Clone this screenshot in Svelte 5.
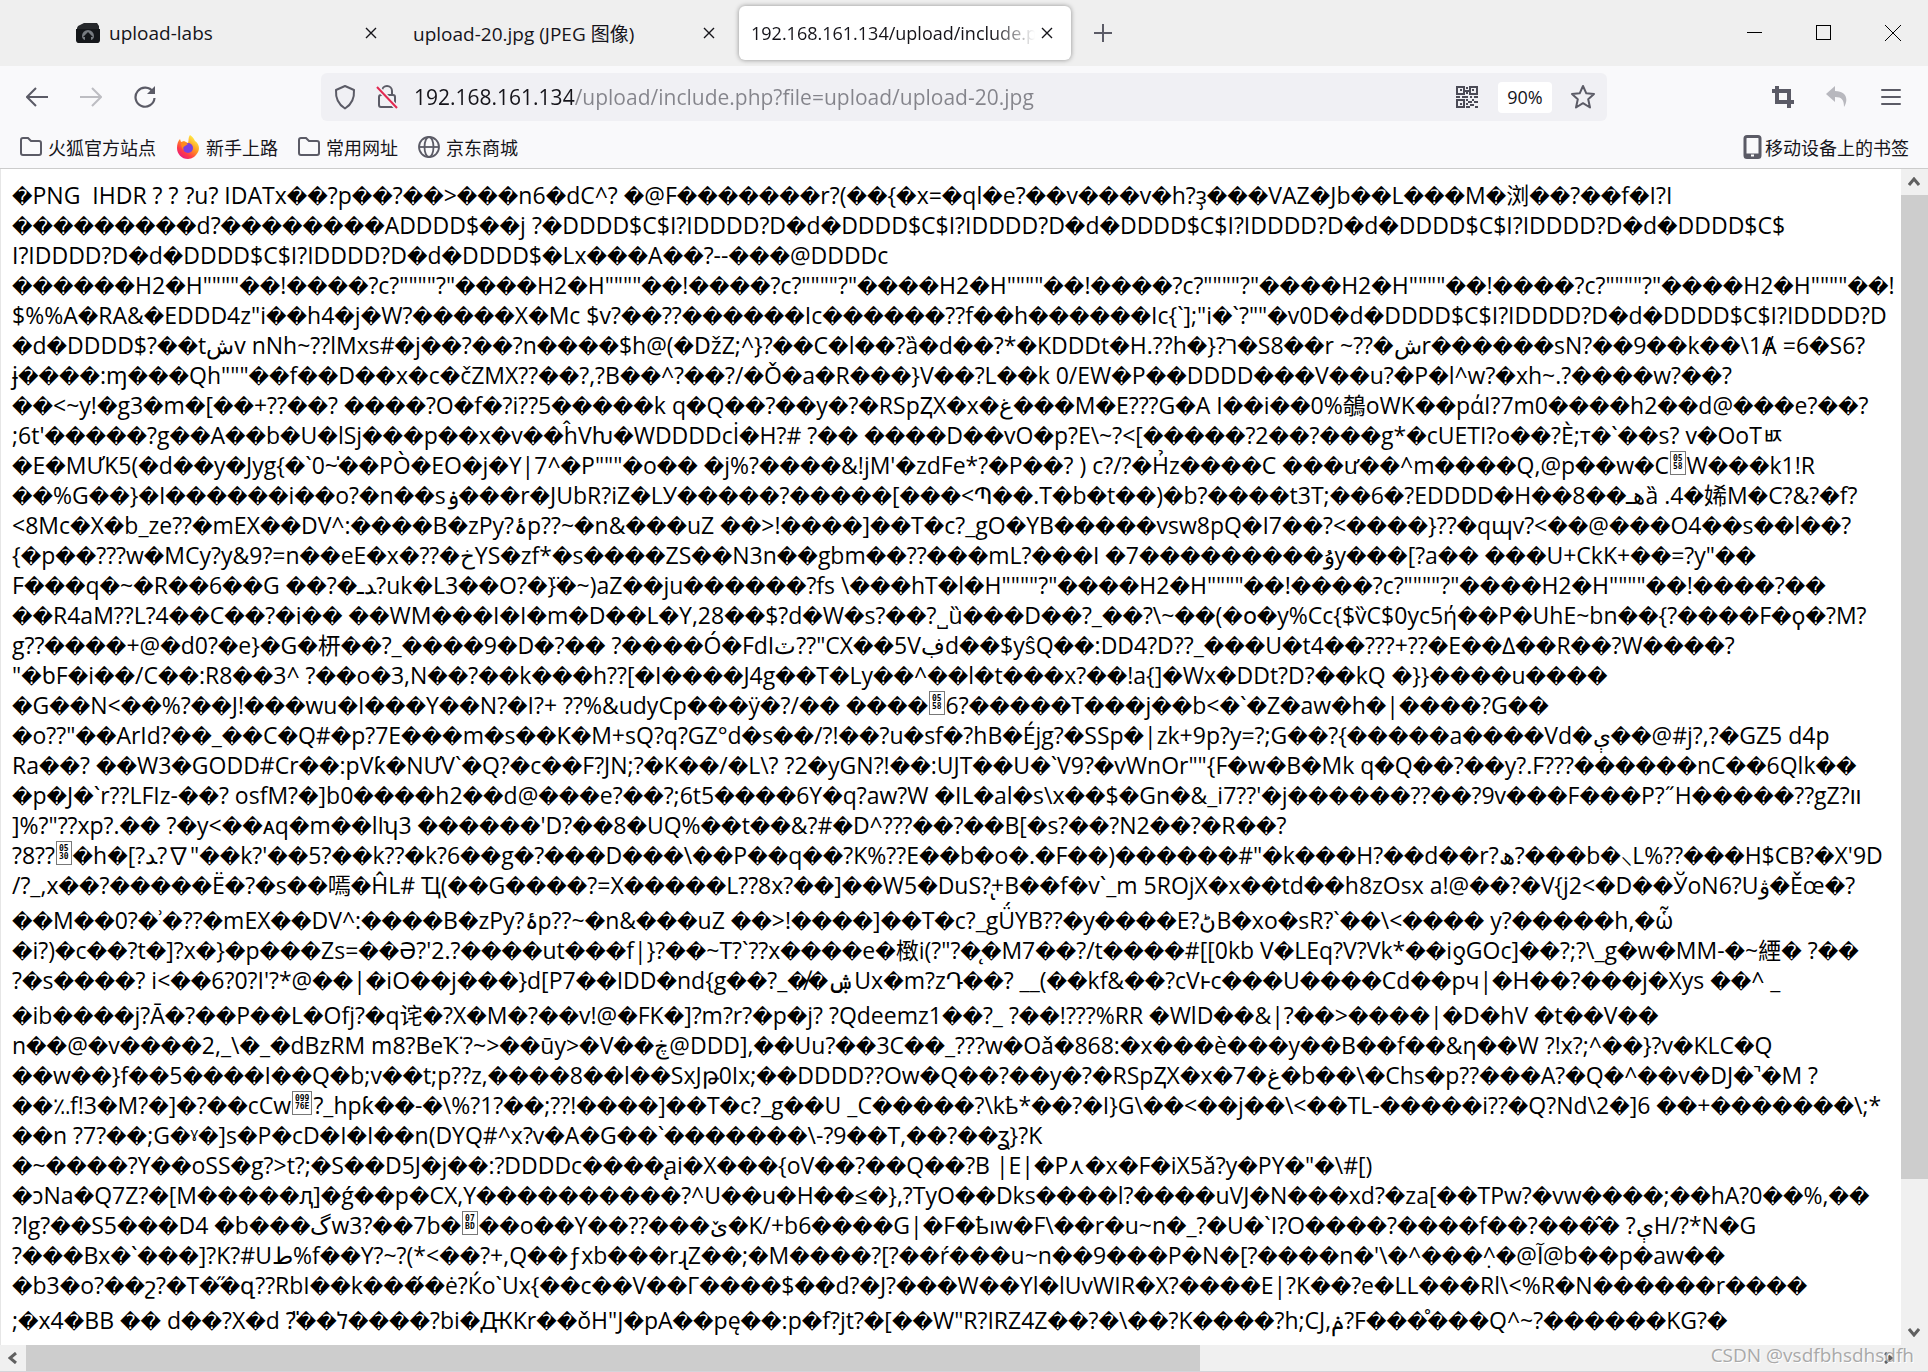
<script>
  let address = '192.168.161.134/upload/include.php?file=upload/upload-20.jpg';

  const tabs = [
    { title: 'upload-labs', icon: true },
    { title: 'upload-20.jpg (JPEG 图像)' },
    { title: '192.168.161.134/upload/include.php', active: true }
  ];

  const bookmarks = [
    { name: '火狐官方站点', icon: 'folder' },
    { name: '新手上路', icon: 'firefox' },
    { name: '常用网址', icon: 'folder' },
    { name: '京东商城', icon: 'globe' }
  ];

  const block = 'DDDD$C$I?IDDDD?D�d�';
  const quotes = 'H2�H""""��!����?c?""""?"����';

  // ⟦hex⟧ is a code point without a glyph, shown as a small box
  const lines = [
    '�PNG  IHDR ? ? ?u? IDATx��?p��?��>���n6�dC^? �@F�������r?(��{�x=�ql�e?��v���v�h?ҙ���VAZ�Jb��L���M�浏��?��f�I?I',
    '���������d?��������ADDDD$��j ?�' + block.repeat(4) + 'DDDD$C$',
    'I?IDDDD?D�d�' + block + 'DDDD$�Lx���A��?--���@DDDDc',
    '������' + quotes.repeat(4) + 'H2�H""""��!',
    '$%%A�RA&�EDDD4z"i��h4�j�W?�����X�Mc $v?��??������Ic������??f��h������Ic{`];"i�`?""�v0D�d�' + block + 'DDDD$C$I?IDDDD?D',
    '�d�DDDD$?��tشv nNh~??lMxs#�j��?��?n����$h@(�ǅZ;^}?��C�l��?ȁ�d��?*�KDDDt�H.??h�}?ר�S8��r ~??�شr������sN?��9��k��\\1Ⱥ =6�S6?',
    'ɉ����:ɱ���Qh"""��f��D��x�c�čZMX??��?,?B��^?��?/�Ǒ�a�R���}V��?L��k 0/EW�P��DDDD���V��u?�P�l^w?�xh~.?����w?��?',
    '��<~y!�g3�m�[��+??��? ����?O�f�?i??5�����k q�Q��?��y�?�RSpⱫX�x�غ���M�E???G�A I��i��0%鵸oWK��pάI?7m0����h2��d@���e?��?',
    ';6t\'�����?g��A��b�U�lSj���p��x�v��ĥVƕ�WDDDDcİ�H?# ?�� ����D��vO�p?E\\~?<[�����?2��?���g*�cUETI?o��?È;т�`��s? v�OoTㅶ',
    '�E�MƯK5(�d��y�Jyg{�`0~̍��PÒ�EO�j�Y|7^�P"""�o�� �j%?����&!jM\'�zdFe*?�P��? ) c?/?�H̉z����C ���ư��^m����Q,@p��w�C⟦0558⟧W���k1!R',
    '��%G��}�I������i��o?�n��sۏ���r�JUbR?iZ�LУ�����?�����[���<Պ��.T�b�t��)�b?����t3T;��6�?EDDDD�H��8��ـهȁ .4�㛓M�C?&?�f?',
    '<8Mc�X�b_ze??�mEX��DV^:����B�zPy?ۂp??~�n&���uZ ��>!����]��T�c?_gO�YB�����vsw8pQ�I7��?<����}??�qɰv?<��@���O4��s��l��?',
    '{�p��???w�MCy?y&9?=n��eE�x�??�خYS�zf*�s����ZS��N3n��gbm��??���mL?���I �7���������ۇy���[?a�� ���U+CkK+��=?y"��',
    'F���q�~�R��6��G ��?�ـﺪ?uk�L3��O?�}̈�~)aZ��ju������?fs \\���hT�l�H""""?"����' + quotes + 'H2�H""""��!����?��',
    '��R4aM??L?4��C��?�i�� ��WM���I�I�m�D��L�Y,28��$?d�W�s?��?˽ȕ���D��?_��?\\~��(�օ�y%Cc{$v̏C$0yc5ή��P�UhE~bn��{?����F�ϙ�?M?',
    'g??����+@�d0?�e}�G�枅��?_����9�D�?�� ?����Ó�FdIٽ??"CX��5Vڣd��$yŝQ��:DD4?D??_���U�t4��???+??�E��∆��R��?W����?',
    '"�ƅF�i��/C��:R8��3^ ?��o�3,N��?��k���h??[�I����J4g��T�Ly��^��l�t���x?��!a{]�Wx�DDt?D?��kQ �}}����u����',
    '�G��N<��%?��J!���wu�I���Y��N?�I?+ ??%&udyCp���ÿ�?/�� ����⟦0558⟧6?�����T���j��b<�`�Z�aw�h�|����?G��',
    '�o??"��ArId?��_��C�Q#�p?7E���m�s��Ƙ�M+sQ?q?GZ°d�s��/?!��?u�sf�?hB�Éjg?�SSp�|zk+9p?y=?;G��?{�����a����Vd�ې��@#j?,?�GZ5 d4p',
    'Ra��? ��W3�GODD#Cr��:pVƙ�NƯV`�Q?�c��F?JN;?�K��/�L\\? ?2�yGN?!��:UJT��U�`V9?�vWnOr""{F�w�B�Mk q�Q��?��y?.F???������nC��6Qlk��',
    '�p�J�`r??LFIz-��? osfM?�]b0����h2��d@���e?��?;6t5����6Y�q?aw?W �IL�al�s\\x��$�Gn�&_i7??\'�j������??��?9v���F���P?˝H�����??gZ?װ',
    ']%?"??xp?.�� ?�y<��ᴀq�m��lIʮ3 ������\'D?��8�UQ%��t��&?#�D^???��?��B[�s?��?N2��?�R��?',
    '?8??⟦0530⟧�h�[?ﺪ?∇"��k?\'��5?��k??�k?6��g�?���D���\\��P��q��?K%??E��b�o�.�F��)������#"�k���H?��d��r?ھ?���b�⸜L%??���H$CB?�X\'9D',
    '/?_,x��?�����Ë�?�s��嘕�ĤL# Ҵ(��G����?=X�����L??8x?��]��W5�DuS?̢+B��f�v`_m 5ROjX�x��td��h8zOsx a!@��?�V{j2<�D��ЎoN6?Uۋ�Ěœ�?',
    '��M��0?�ʾ�??�mEX��DV^:����B�zPy?ۂp??~�n&���uZ ��>!����]��T�c?_gǗYB??�y����E?ڻB�xo�sR?`��\\<���� y?�����h,�ὧ',
    '�i?)�c��?t�]?x�}�p���Zs=��Ə?\'2.?����ut���f|}?��~T?`??x����e�㮹i(?"?�̨�M7��?/t����#[[0kb V�LEq?V?Vk*��iƍGOc]��?;?\\_g�w�MM-�~緸� ?��',
    '?�s����? i<��6?0?I\'?*@��|�iO��j���}d[P7��IDD�nd{g��?_�̸�ۺUx�m?zԴ��? __(��kf&��?cVⱶc���U����Cd��pч|�H��?���j�Xys ��^ _',
    '�ib����j?Ā�?��P��L�Ofj?�q诧�?X�M�?��v!@�FK�]?m?r?�p�j? ?Qdeemz1��?_ ?��!???%RR �WlD��&|?��>����|�D�hV �t��V��',
    'n��@�v����2,_\\�_�dBzRM m8?BeҠ˙?~>��ūy>�V��ڿ@DDD],��Uu?��3C��_???w�Oǎ�868:�x���è���y��B��f��&η��W ?!x?;^��}?v�KLC�Q',
    '��w��}f��5����I��Q�b;v��t;p??z,����8��l��SxJթ0Ix;��DDDD??Ow�Q��?��y�?�RSpⱫX�x�7�غ�b��\\�Chs�p??���A?�Q�^��v�DJ�̚�M ?',
    '��؉f!3�M?�]�?��cCw⟦09976E⟧?_hpƙ��-�\\%?1?��;??!����]��T�c?_g��U _C�����?\\kҍ*��?�I}G\\��<��j��\\<��TL-�����i??�Q?Nd\\2�]6 ��+�������\\;*',
    '��n ?7?��;G�ˠ�]s�P�cD�I�I��n(DYQ#^x?v�A�G��`�������\\-?9��T,��?��ʓ}?K',
    '�~����?Y��oSS�g?>t?;�S��D5J�j��:?DDDDc����̢ai�X���{oV��?��Q��?B |E|�P⋏�x�F�iX5ǎ?y�PY�"�\\#[)',
    '�ɔNa�Q7Z?�[M�����ԯ]�ǵ��p�CX,Y����������?^U��u�H��≤�},?TyO��Dks����l?����uVJ�N���xd?�za[��TPw?�vw����;��hA?0��%,��',
    '?lg?��S5���D4 �b���گw3?��7b�⟦07BD⟧��o��Y��??���ێ�K/+b6����G|�F�ҍıw�F\\��r�u~n�_?�U�`I?O����?����f��?���̂� ?ېH/?*N�G',
    '?���Bx�`���]?K?#Uط%f��Y?~?(*<��?+,Q��ƒxb���rɻZ��;�M����?[?��ŕ���u~n��9���P�N�[?����n�\'\\�^���^̣�@آ@b��p�aw��',
    '�b3�o?��շ?�T�̋�զ??RbI��k���́�ė?Ќo`Ux{��c��V��Γ����$��d?�J?���W��Yl�lUvWIR�X?����E|?K��?e�LL���Rl\\<%R�N������r����',
    ';�x4�BB �� d��?X�d ?̎��ל����?bi�ԪKr��ǒH"J�pA��pę��:p�f?jt?�[��W"R?IRZ4Z��?�\\��?K����?h;CJ,ݥ?F���̊���Q^~?������KG?�'
  ];

  // these lines hold stacked marks and are a little taller than the rest
  const tall = [24, 27, 37];

  function runs(line) {
    return line.split(/(�+|⟦\w+⟧)/).filter(Boolean);
  }
</script>

<div class="window">
  <header class="tabbar">
    <div class="tabs">
      {#each tabs as tab}
        <div class="tab" class:active={tab.active}>
          {#if tab.icon}
            <svg class="favicon" viewBox="0 0 26 24" aria-hidden="true">
              <path d="M3 5 L9 2 L22 2 L24 5 V20 Q24 22 22 22 H4 Q2 22 2 20 V7 Z" fill="#26282b" />
              <path d="M1 8 H25 V19 Q25 22 22 22 H4 Q1 22 1 19 Z" fill="#15171a" />
              <path d="M13 9 a6 6 0 0 1 6 6 q0 3-3 4 v-3 h2 l-5-5 -5 5 h2 v3 q-3-1-3-4 a6 6 0 0 1 6-6 Z" fill="#777b80" />
            </svg>
          {/if}
          <button class="tab-title">{tab.title}</button>
          <button class="tab-close" aria-label="关闭标签页">
            <svg width="12" height="12" viewBox="0 0 12 12"><path d="M1 1 L11 11 M11 1 L1 11" stroke="#15141a" stroke-width="1.4" /></svg>
          </button>
        </div>
      {/each}
      <button class="new-tab" aria-label="新建标签页">
        <svg width="18" height="18" viewBox="0 0 18 18"><path d="M9 0 V18 M0 9 H18" stroke="#5b5b66" stroke-width="2" /></svg>
      </button>
    </div>
    <div class="controls">
      <button aria-label="最小化"><svg width="16" height="16" viewBox="0 0 16 16"><path d="M0 7.5 H15" stroke="#000" /></svg></button>
      <button aria-label="最大化"><svg width="16" height="16" viewBox="0 0 16 16"><rect x="0.5" y="0.5" width="14" height="14" fill="none" stroke="#000" /></svg></button>
      <button aria-label="关闭"><svg width="16" height="16" viewBox="0 0 16 16"><path d="M0 0 L16 16 M16 0 L0 16" stroke="#000" /></svg></button>
    </div>
  </header>

  <nav class="toolbar">
    <button class="tool" aria-label="后退">
      <svg width="22" height="20" viewBox="0 0 22 20"><path d="M10 1 L1 10 L10 19 M1 10 H22" fill="none" stroke="#5b5b66" stroke-width="2" /></svg>
    </button>
    <button class="tool" aria-label="前进" disabled>
      <svg width="22" height="20" viewBox="0 0 22 20"><path d="M12 1 L21 10 L12 19 M21 10 H0" fill="none" stroke="#bdbdc2" stroke-width="2" /></svg>
    </button>
    <button class="tool" aria-label="刷新">
      <svg width="24" height="24" viewBox="0 0 24 24"><path d="M20 7 A9.5 9.5 0 1 0 21.5 13" fill="none" stroke="#5b5b66" stroke-width="2.2" /><path d="M22 1 V9 H14 Z" fill="#5b5b66" /></svg>
    </button>

    <div class="urlbar">
      <button class="url-icon" aria-label="跟踪保护">
        <svg width="22" height="26" viewBox="0 0 22 26"><path d="M11 2 L20 6 C20.500 14 18.500 20 11 24.500 C3.500 20 1.500 14 2 6 Z" fill="none" stroke="#5b5b66" stroke-width="2" stroke-linejoin="round" /></svg>
      </button>
      <button class="url-icon" aria-label="连接不安全">
        <svg width="22" height="26" viewBox="0 0 22 26"><path d="M6 11 V7 a5 5 0 0 1 10 0 V11" fill="none" stroke="#5b5b66" stroke-width="2" /><rect x="3" y="11" width="16" height="12" rx="2" fill="none" stroke="#5b5b66" stroke-width="2" /><path d="M1 3 L21 24" stroke="#f0f0f4" stroke-width="5" /><path d="M1 3 L21 24" stroke="#e22850" stroke-width="2" /></svg>
      </button>
      <input class="address" type="text" aria-label="网址" spellcheck="false" bind:value={address} />
      <button class="url-icon" aria-label="二维码">
        <svg width="22" height="22" viewBox="0 0 11 11" fill="none" stroke="#4a4a55">
          <path d="M.5 .5 H4 V4 H.5 Z M7 .5 H10.500 V4 H7 Z M.5 7 H4 V10.500 H.5 Z" />
          <path d="M2 2 h1 M8 2 h1 M2 9 h1 M5 1 h1 M4 2.500 h3 M5 3.500 h1 M0 5.500 h2 M3 5.500 h3 M5 7 h1 M7 5.500 h1 M9 5.500 h2 M6 8 h2 M8 7 h1 M9 8 h2 M5 9 h1 M7 9.500 h2 M5 10.500 h2 M9.500 10.500 h1.500" />
        </svg>
      </button>
      <button class="zoom">90%</button>
      <button class="url-icon" aria-label="添加书签">
        <svg width="26" height="26" viewBox="0 0 26 26"><path d="M13 2 L16.300 9.300 L24 10 L18.200 15.300 L20 23.500 L13 19.200 L6 23.500 L7.800 15.300 L2 10 L9.700 9.300 Z" fill="none" stroke="#5b5b66" stroke-width="2" stroke-linejoin="round" /></svg>
      </button>
    </div>

    <button class="tool" aria-label="截图">
      <svg width="22" height="22" viewBox="0 0 22 22"><path d="M5 0 V16 H22 M0 5 H17 V22" fill="none" stroke="#5b5b66" stroke-width="4" /></svg>
    </button>
    <button class="tool" aria-label="撤销">
      <svg width="22" height="22" viewBox="0 0 22 22"><path d="M0 8 L9 0 V5 C20 5 23 13 18 21 C18 14 16 11 9 11 V16 Z" fill="#b8b8be" /></svg>
    </button>
    <button class="tool" aria-label="菜单">
      <svg width="20" height="16" viewBox="0 0 20 16"><path d="M1 1 H19 M1 8 H19 M1 15 H19" stroke="#5b5b66" stroke-width="2" stroke-linecap="round" /></svg>
    </button>
  </nav>

  <div class="bookmarks">
    {#each bookmarks as mark}
      <a href="#top">
        {#if mark.icon === 'folder'}
          <svg width="22" height="22" viewBox="0 0 22 22"><path d="M1 17 V4 Q1 2 3 2 H8 L11 5 H19 Q21 5 21 7 V17 Q21 19 19 19 H3 Q1 19 1 17 Z" fill="none" stroke="#5b5b66" stroke-width="2" /></svg>
        {:else if mark.icon === 'firefox'}
          <svg width="24" height="24" viewBox="0 0 24 24">
            <defs>
              <linearGradient id="flame" x1="0.9" y1="0" x2="0.2" y2="1">
                <stop offset="0.1" stop-color="#fff14a" />
                <stop offset="0.45" stop-color="#ff9a1f" />
                <stop offset="0.75" stop-color="#ff3b47" />
                <stop offset="1" stop-color="#e31587" />
              </linearGradient>
            </defs>
            <path d="M14 0 C17 2 18 4 19 6 C22 8 24 12 22.500 16 C20.500 21 16 24 12 24 C5.500 24 1 19 1 13 C1 9 2 6 4 4 L5 7 L8 6 L12 8 C13 5 12 3 14 0 Z" fill="url(#flame)" />
            <circle cx="12" cy="13" r="5" fill="#7a3fe0" />
            <path d="M5 8 Q8 6 12 9 L9 11 Q6 12 8 15 Q5 13 5 8 Z" fill="#ff8a1c" />
          </svg>
        {:else}
          <svg width="22" height="22" viewBox="0 0 22 22" fill="none" stroke="#5b5b66" stroke-width="1.800"><circle cx="11" cy="11" r="10" /><ellipse cx="11" cy="11" rx="4.500" ry="10" /><path d="M1 11 H21" /></svg>
        {/if}
        {mark.name}
      </a>
    {/each}
    <a href="#top" class="mobile">
      <svg width="20" height="24" viewBox="0 0 20 24"><rect x="2" y="1.500" width="15" height="21" rx="2" fill="none" stroke="#5b5b66" stroke-width="3" /><path d="M2 20.500 H17" stroke="#5b5b66" stroke-width="4" /><path d="M8 20.500 H11" stroke="#fff" stroke-width="2" /></svg>
      移动设备上的书签
    </a>
  </div>

  <div class="content">
    <main class="page">
      {#each lines as line, i}
        <div class="line" class:tall={tall.includes(i)}>{#each runs(line) as run}{#if run[0] === '�'}<span class="bad">{run}</span>{:else if run[0] === '⟦'}<span class="hex">{run.slice(1, run.length / 2)}<br />{run.slice(run.length / 2, -1)}</span>{:else}{run}{/if}{/each}</div>
      {/each}
    </main>
    <div class="vbar">
      <button aria-label="向上滚动"><svg width="12" height="10" viewBox="0 0 12 10"><path d="M1 8 L6 2 L11 8" fill="none" stroke="#606060" stroke-width="3" /></svg></button>
      <div class="track"><div class="thumb"></div></div>
      <button aria-label="向下滚动"><svg width="12" height="10" viewBox="0 0 12 10"><path d="M1 2 L6 8 L11 2" fill="none" stroke="#606060" stroke-width="3" /></svg></button>
    </div>
    <div class="hbar">
      <button aria-label="向左滚动"><svg width="10" height="12" viewBox="0 0 10 12"><path d="M8 1 L2 6 L8 11" fill="none" stroke="#606060" stroke-width="3" /></svg></button>
      <div class="track"><div class="thumb"></div></div>
      <button aria-label="向右滚动"><svg width="10" height="12" viewBox="0 0 10 12"><path d="M2 1 L8 6 L2 11" fill="none" stroke="#606060" stroke-width="3" /></svg></button>
    </div>
    <div class="corner"></div>
  </div>
  <div class="watermark">CSDN @vsdfbhsdhsdfh</div>
</div>

<style>
  .window {
    position: relative;
    display: flex;
    flex-direction: column;
    height: 100vh;
    box-sizing: border-box;
    border-bottom: 1px solid #d4d4da;
    background: #fff;
    color: #15141a;
    font-family: "Open Sans", "Noto Sans", "Noto Sans CJK SC", sans-serif;
    font-size: 18px;
    overflow: hidden;
  }

  button {
    display: flex;
    align-items: center;
    justify-content: center;
    border: none;
    background: none;
    padding: 0;
    color: inherit;
    font: inherit;
  }

  svg {
    flex: none;
  }

  .tabbar {
    display: flex;
    justify-content: space-between;
    height: 66px;
    flex: none;
    background: #efefef;
  }

  .tabs {
    display: flex;
    align-items: center;
    gap: 6px;
    padding-left: 63px;
  }

  .tab {
    display: flex;
    align-items: center;
    width: 332px;
    height: 54px;
    box-sizing: border-box;
    padding: 0 12px;
    border-radius: 6px;
    font-size: 19px;
  }

  .tab.active {
    background: #fff;
    box-shadow: 0 0 5px rgba(0, 0, 0, 0.4);
    font-size: 18px;
  }

  .favicon {
    width: 26px;
    height: 24px;
    margin-right: 8px;
  }

  .tab-title {
    flex: 1;
    min-width: 0;
    justify-content: flex-start;
    overflow: hidden;
    white-space: nowrap;
  }

  .active .tab-title {
    -webkit-mask-image: linear-gradient(to right, #000 85%, transparent);
    mask-image: linear-gradient(to right, #000 85%, transparent);
  }

  .tab-close {
    width: 24px;
    height: 24px;
  }

  .new-tab {
    width: 52px;
    height: 54px;
  }

  .controls {
    display: flex;
    padding-right: 1px;
  }

  .controls button {
    width: 69px;
  }

  .toolbar {
    display: flex;
    align-items: center;
    flex: none;
    height: 62px;
    padding: 0 10px;
    background: #f9f9fb;
  }

  .tool {
    width: 54px;
    height: 48px;
  }

  .urlbar {
    display: flex;
    align-items: center;
    flex: 1;
    height: 48px;
    margin: 0 149px;
    padding: 0 3px;
    border-radius: 6px;
    background: #f0f0f4;
  }

  .url-icon {
    width: 42px;
    height: 42px;
    flex: none;
  }

  .address {
    flex: 1;
    min-width: 0;
    padding: 0 0 0 6px;
    border: none;
    outline: none;
    font: inherit;
    font-size: 21px;
    color: transparent;
    background: linear-gradient(to right, #15141a 167px, #84848b 167px);
    -webkit-background-clip: text;
    background-clip: text;
  }

  .zoom {
    width: 54px;
    height: 31px;
    margin: 0 10px;
    border-radius: 4px;
    background: #fff;
    font-size: 18px;
  }

  .bookmarks {
    display: flex;
    align-items: center;
    flex: none;
    gap: 20px;
    height: 37px;
    padding: 0 19px 3px 20px;
    border-bottom: 1px solid #cccccc;
    background: #f9f9fb;
  }

  .bookmarks a {
    display: flex;
    align-items: center;
    gap: 6px;
    color: inherit;
    text-decoration: none;
    white-space: nowrap;
  }

  .bookmarks .mobile {
    gap: 2px;
    margin-left: auto;
  }

  .content {
    display: grid;
    grid-template-columns: minmax(0, 1fr) 27px;
    grid-template-rows: minmax(0, 1fr) 26px;
    flex: 1;
    min-height: 0;
  }

  .page {
    overflow: hidden;
    padding: 11px 0 0 11px;
    border-left: 1px solid #e6e6e6;
    color: #000;
    font-size: 23px;
  }

  .line {
    line-height: 30px;
    white-space: pre;
    direction: ltr;
    unicode-bidi: bidi-override;
  }

  .line.tall {
    padding-top: 5px;
  }

  .bad {
    font-family: "DejaVu Sans", sans-serif;
    font-size: 20px;
    line-height: 0;
  }

  .hex {
    display: inline-block;
    margin: -4px 1px 0;
    padding: 3px 2px;
    border: 1px solid #777;
    font-family: "DejaVu Sans Mono", monospace;
    font-size: 8px;
    font-weight: bold;
    line-height: 8px;
    vertical-align: 5px;
  }

  .vbar,
  .hbar {
    display: flex;
    background: #f0f0f0;
  }

  .vbar {
    flex-direction: column;
  }

  .vbar button,
  .hbar button {
    width: 26px;
    height: 26px;
    flex: none;
  }

  .track {
    flex: 1;
  }

  .thumb {
    background: #cdcdcd;
  }

  .vbar .thumb {
    height: 87.5%;
  }

  .hbar .thumb {
    width: 63.5%;
    height: 100%;
  }

  .corner {
    background: #f0f0f0;
  }

  .watermark {
    position: absolute;
    right: 14px;
    bottom: 3px;
    color: #a9a9a9;
    font-size: 19px;
    text-shadow: 1px 1px 0 #fff;
  }
</style>
